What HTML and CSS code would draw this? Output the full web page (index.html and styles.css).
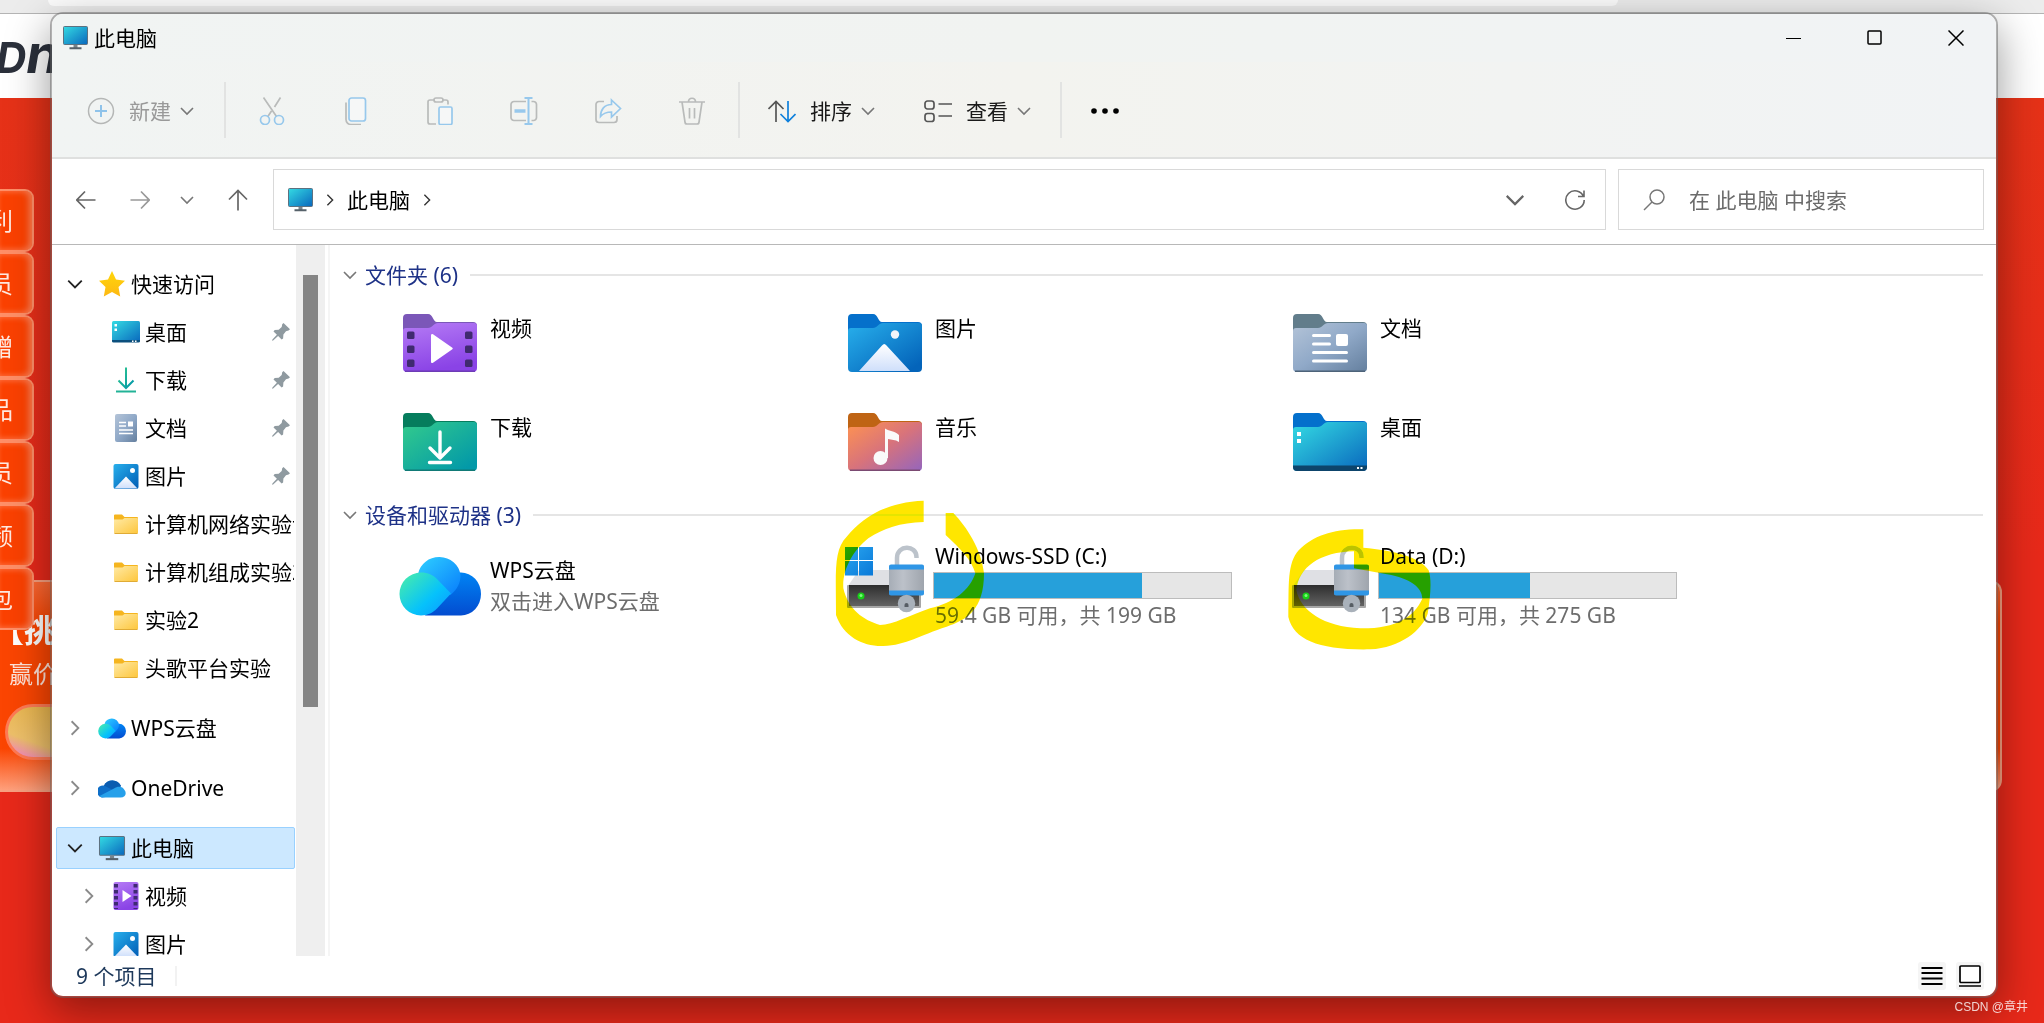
FILE: index.html
```html
<!DOCTYPE html>
<html lang="zh-CN">
<head>
    <meta charset="UTF-8">
    <meta name="viewport" content="width=device-width, initial-scale=1.0">
    <title>此电脑</title>
    <link rel="stylesheet" href="styles.css">
</head>
<body>
    <!-- shared icons -->
    <svg class="sprite" aria-hidden="true">
        <defs>
            <linearGradient id="g-screen" x1="0" y1="0" x2="1" y2="1"><stop offset="0" stop-color="#34dbe3"/><stop offset="1" stop-color="#0967bd"/></linearGradient>
            <linearGradient id="g-video" x1="0" y1="0" x2="0.3" y2="1"><stop offset="0" stop-color="#b57bf5"/><stop offset="1" stop-color="#8a43e6"/></linearGradient>
            <linearGradient id="g-down" x1="0" y1="0" x2="1" y2="1"><stop offset="0" stop-color="#33cb8c"/><stop offset="0.9" stop-color="#0399a8"/></linearGradient>
            <linearGradient id="g-pic" x1="0" y1="0" x2="1" y2="1"><stop offset="0" stop-color="#28b0ec"/><stop offset="0.9" stop-color="#0464ba"/></linearGradient>
            <linearGradient id="g-doc" x1="0" y1="0" x2="1" y2="1"><stop offset="0" stop-color="#b4c4d8"/><stop offset="0.5" stop-color="#90a9c8"/><stop offset="1" stop-color="#647f9e"/></linearGradient>
            <linearGradient id="g-music" x1="0" y1="0" x2="1" y2="1"><stop offset="0" stop-color="#ff9350"/><stop offset="0.5" stop-color="#d8737b"/><stop offset="1" stop-color="#9465bd"/></linearGradient>
            <linearGradient id="g-hill" x1="0" y1="0" x2="0" y2="1"><stop offset="0" stop-color="#fff"/><stop offset="1" stop-color="#cfdffb"/></linearGradient>
            <linearGradient id="g-folder" x1="0" y1="0" x2="1" y2="1"><stop offset="0" stop-color="#ffeaa6"/><stop offset="1" stop-color="#fdc63c"/></linearGradient>
            <linearGradient id="g-star" x1="0" y1="0" x2="0" y2="1"><stop offset="0" stop-color="#ffd60a"/><stop offset="1" stop-color="#fdb813"/></linearGradient>
            <linearGradient id="g-wps1" x1="0" y1="0" x2="1" y2="1"><stop offset="0" stop-color="#2fd0ff"/><stop offset="1" stop-color="#087dfc"/></linearGradient>
            <linearGradient id="g-wps2" x1="0" y1="0" x2="0.9" y2="0.8"><stop offset="0.15" stop-color="#3de6b8"/><stop offset="0.7" stop-color="#06c2fb"/><stop offset="1" stop-color="#0aa5ff"/></linearGradient>
            <linearGradient id="g-wps3" x1="0" y1="0" x2="0" y2="1"><stop offset="0" stop-color="#0084f4"/><stop offset="1" stop-color="#034cd0"/></linearGradient>
            <linearGradient id="g-disk" x1="0" y1="0" x2="0" y2="1"><stop offset="0" stop-color="#2d2d2d"/><stop offset="1" stop-color="#636363"/></linearGradient>
            <linearGradient id="g-lock" x1="0" y1="0" x2="1" y2="0"><stop offset="0" stop-color="#a6adb6"/><stop offset="0.4" stop-color="#bcc1c9"/><stop offset="1" stop-color="#9fa5ad"/></linearGradient>
            <linearGradient id="g-win" x1="0" y1="0" x2="1" y2="1"><stop offset="0" stop-color="#2aa6f0"/><stop offset="1" stop-color="#0a79d8"/></linearGradient>
        </defs>

        <symbol id="pc" viewBox="0 0 25 24">
            <rect x="0.5" y="0.5" width="24" height="18" rx="1" fill="url(#g-screen)" stroke="#5d7180"/>
            <path d="M10.500 19h4v3h-4z" fill="#7a858c"/><path d="M6.500 21.200h12v2h-12z" fill="#56616a"/>
        </symbol>
        <symbol id="down" viewBox="0 0 16 16"><path d="M2 5l6 6 6-6" fill="none" stroke="currentColor" stroke-width="1.600"/></symbol>
        <symbol id="right" viewBox="0 0 16 16"><path d="M5 2l6 6-6 6" fill="none" stroke="currentColor" stroke-width="1.600"/></symbol>
        <symbol id="pin" viewBox="0 0 20 20"><path d="M12.500 1l6.500 6.300-1.500 1.300-2.500.6-2.600 3.300-.3 4-1.500 1-3.500-3.500-5 4.500-1 .2.300-1.200 4.500-4.700L2.500 9.500l1.200-1.600 4-.2 3-2.700.5-2.800z" fill="#8f9aa0"/></symbol>
        <symbol id="dir" viewBox="0 0 25 20">
            <path d="M0.500 1.500a1 1 0 0 1 1-1h7l2.500 2.500h12.500a1 1 0 0 1 1 1v2H0.500z" fill="#f5b51f"/>
            <path d="M0.500 5.500h8.500l2-1.500h12.500a1 1 0 0 1 1 1v13.500a1 1 0 0 1-1 1h-22a1 1 0 0 1-1-1z" fill="url(#g-folder)"/>
            <path d="M1 19.500h23" stroke="#e0ab35"/>
        </symbol>
        <symbol id="picture" viewBox="0 0 25 25">
            <rect width="25" height="25" rx="2" fill="url(#g-pic)"/><circle cx="19" cy="6.500" r="2.500" fill="#fff"/>
            <path d="M1 24.500L12.500 12.500l11.500 12z" fill="url(#g-hill)"/>
        </symbol>
        <symbol id="film" viewBox="0 0 25 28">
            <rect width="25" height="28" rx="2" fill="url(#g-video)"/>
            <path d="M2.500 2v25M22 2v25" stroke="#3f2a73" stroke-width="4" stroke-dasharray="3.500 2.500"/>
            <path d="M9 8l9 6-9 6z" fill="#fff"/>
        </symbol>
        <symbol id="wps" viewBox="0 0 82 62">
            <path d="M58 18.500h4a20 21.500 0 0 1 0 43H26z" fill="url(#g-wps3)"/>
            <path d="M19 20a21.500 20.500 0 0 1 42.500 1c0 8-3 14-10 20z" fill="url(#g-wps1)"/>
            <path d="M22 18.500c7 0 12 2.500 16 6.500l14 14.500-14 15c-4 4-9 7-16 7a21.500 21.500 0 0 1 0-43z" fill="url(#g-wps2)"/>
        </symbol>
        <symbol id="disk" viewBox="0 0 82 68">
            <path d="M15 25h49l12 16H4z" fill="#dfe0e4"/>
            <rect x="3" y="40" width="74" height="23" rx="1" fill="#a7a7a7"/>
            <rect x="5" y="40" width="70" height="21" fill="url(#g-disk)"/>
            <circle cx="17" cy="51" r="3.500" fill="#18d018"/><circle cx="17" cy="50.500" r="1.500" fill="#7cf97c"/>
            <path d="M53 21V13c0-13.500 19.500-13.500 19.500-1v1" fill="none" stroke="#bcc3cb" stroke-width="4.500"/>
            <rect x="45" y="20" width="35" height="30" rx="2" fill="url(#g-lock)"/>
            <path d="M45 24.500V21.500a2 2 0 0 1 2-2h31a2 2 0 0 1 2 2v3zM45 45.500v3a2 2 0 0 0 2 2h31a2 2 0 0 0 2-2v-3z" fill="#2f96e6"/>
            <circle cx="62.500" cy="58.500" r="8.700" fill="#a9b1ba"/><path d="M60.500 62v-2a2 2 0 0 1 4 0v2z" fill="#565d64"/>
        </symbol>
    </svg>

    <!-- browser page behind the window -->
    <div class="page">
        <div class="browser-bar"><div class="browser-url"></div></div>
        <div class="site-header"><span class="logo">D<span class="logo-n">n</span></span></div>
        <div class="hero">
            <div class="promo">
                <div class="promo-title">【挑</div>
                <div class="promo-sub">赢价</div>
                <div class="promo-pill"></div>
            </div>
            <div class="side-tabs">
                <a href="#">利</a>
                <a href="#">员</a>
                <a href="#">赠</a>
                <a href="#">品</a>
                <a href="#">员</a>
                <a href="#">频</a>
                <a href="#">包</a>
            </div>
        </div>
    </div>

    <div class="window">
        <div class="titlebar">
            <svg class="pc-icon"><use href="#pc"/></svg>
            <span class="title">此电脑</span>
            <button class="win-btn" aria-label="最小化"><svg width="16" height="16"><path d="M0 8.500h15" stroke="#000" stroke-width="1"/></svg></button>
            <button class="win-btn" aria-label="最大化"><svg width="16" height="16"><rect x="1" y="1" width="13" height="13" rx="1" fill="none" stroke="#000" stroke-width="1.500"/></svg></button>
            <button class="win-btn" aria-label="关闭"><svg width="16" height="16"><path d="M0.500 0.500l15 15M15.500 0.500l-15 15" stroke="#000" stroke-width="1.500"/></svg></button>
        </div>

        <div class="toolbar">
            <button class="tool tool-new" disabled>
                <svg width="28" height="28" fill="none" stroke="#b5b7b6" stroke-width="1.500"><circle cx="14" cy="14" r="12.500"/><path d="M14 8v12M8 14h12" stroke="#8fc3ea" stroke-width="2"/></svg>
                <span>新建</span>
                <svg class="chev"><use href="#down"/></svg>
            </button>
            <span class="sep"></span>
            <div class="tool-group">
                <button class="tool-icon" aria-label="剪切" disabled>
                    <svg width="28" height="28" fill="none" stroke="#b9bbba" stroke-width="1.700"><path d="M5.500 0.500l13 19M22.500 0.500l-6 9.500M13.500 14l-4 6"/><g stroke="#97c8ec"><circle cx="7" cy="23" r="4.500"/><circle cx="21" cy="23" r="4.500"/></g></svg>
                </button>
                <button class="tool-icon" aria-label="复制" disabled>
                    <svg width="28" height="28" fill="none" stroke="#b9bbba" stroke-width="1.700"><path d="M4 5.500v17a5 5 0 0 0 5 5h10"/><rect x="7" y="1" width="16.500" height="23" rx="2.500" stroke="#97c8ec" fill="#f6f7f7"/></svg>
                </button>
                <button class="tool-icon" aria-label="粘贴" disabled>
                    <svg width="28" height="28" fill="none" stroke="#b9bbba" stroke-width="1.700"><path d="M10 27H4a2 2 0 0 1-2-2V5a2 2 0 0 1 2-2h4M17 3h3a2 2 0 0 1 2 2v2.500"/><rect x="8" y="1" width="9" height="4" rx="2"/><rect x="13" y="10" width="13" height="17.500" rx="1.500" stroke="#97c8ec" fill="#f6f7f7"/></svg>
                </button>
                <button class="tool-icon" aria-label="重命名" disabled>
                    <svg width="28" height="28" fill="none" stroke="#b9bbba" stroke-width="1.700"><path d="M16 23.500H4a3 3 0 0 1-3-3V7.500a3 3 0 0 1 3-3h12M21.500 4.500h2a3 3 0 0 1 3 3v13a3 3 0 0 1-3 3h-2"/><g stroke="#97c8ec" stroke-width="2"><path d="M18.500 1v26M14.500 1h8M14.500 27h8"/><path d="M4.500 14h11" stroke-width="3.500"/></g></svg>
                </button>
                <button class="tool-icon" aria-label="共享" disabled>
                    <svg width="28" height="28" fill="none" stroke="#b9bbba" stroke-width="1.700"><path d="M10 4.500H5a3 3 0 0 0-3 3v15a3 3 0 0 0 3 3h15a3 3 0 0 0 3-3v-3.500"/><path d="M17.500 3l9 8.500-9 8.500v-5c-5 0-8 1-11 4.500 0-7 4-12 11-12z" stroke="#97c8ec"/></svg>
                </button>
                <button class="tool-icon" aria-label="删除" disabled>
                    <svg width="28" height="28" fill="none" stroke="#b9bbba" stroke-width="1.700"><path d="M1 5h26M4 5l3 20a2 2 0 0 0 2 2h10a2 2 0 0 0 2-2l3-20M10.500 5c0-5 7-5 7 0M11.500 11v10.500M16.500 11v10.500"/></svg>
                </button>
            </div>
            <span class="sep"></span>
            <div class="tool-group">
                <button class="tool tool-menu">
                    <svg width="28" height="28" fill="none" stroke-width="1.700"><path d="M8 25V5M0.500 12L8 4.500l7.500 7.500" stroke="#555"/><path d="M20 4v20M12.500 17l7.500 7.500 7.500-7.500" stroke="#0f80dc"/></svg>
                    <span>排序</span>
                    <svg class="chev"><use href="#down"/></svg>
                </button>
                <button class="tool tool-menu">
                    <svg width="28" height="28" fill="none" stroke="#555" stroke-width="1.700"><rect x="1" y="4" width="9" height="8" rx="2.500"/><rect x="1" y="16.500" width="9" height="8" rx="2.500"/><path d="M14.500 7H28M14.500 19H28"/></svg>
                    <span>查看</span>
                    <svg class="chev"><use href="#down"/></svg>
                </button>
            </div>
            <span class="sep"></span>
            <button class="more" aria-label="更多"><svg width="28" height="6"><circle cx="3" cy="3" r="2.800"/><circle cx="14" cy="3" r="2.800"/><circle cx="25" cy="3" r="2.800"/></svg></button>
        </div>

        <div class="navbar">
            <button class="nav-btn" aria-label="后退"><svg width="20" height="20" fill="none" stroke="#666" stroke-width="1.700"><path d="M19.500 10H1M9 1.500L0.800 10 9 18.500"/></svg></button>
            <button class="nav-btn" aria-label="前进"><svg width="20" height="20" fill="none" stroke="#999" stroke-width="1.700"><path d="M0.500 10H19M11 1.500l8.200 8.500-8.200 8.500"/></svg></button>
            <button class="nav-btn nav-recent" aria-label="最近浏览的位置"><svg class="chev"><use href="#down"/></svg></button>
            <button class="nav-btn nav-up" aria-label="上移"><svg width="20" height="22" fill="none" stroke="#666" stroke-width="1.700"><path d="M10 21.500V2M1 10.500L10 1.500l9 9"/></svg></button>
            <div class="address">
                <svg class="pc-icon"><use href="#pc"/></svg>
                <svg class="crumb"><use href="#right"/></svg>
                <a href="#">此电脑</a>
                <svg class="crumb"><use href="#right"/></svg>
                <button class="addr-btn addr-first" aria-label="历史记录"><svg width="22" height="22"><use href="#down"/></svg></button>
                <button class="addr-btn" aria-label="刷新"><svg width="22" height="22" fill="none" stroke="#666" stroke-width="1.600"><path d="M19.500 7.500A9.200 9.200 0 1 0 20.200 11M20 1.500v6h-6"/></svg></button>
            </div>
            <label class="search">
                <svg width="22" height="22" fill="none" stroke="#777" stroke-width="1.500"><circle cx="14" cy="8" r="7"/><path d="M9 13L1 21"/></svg>
                <input type="text" placeholder="在 此电脑 中搜索" aria-label="搜索">
            </label>
        </div>

        <div class="body">
            <nav class="sidebar">
                <ul>
                    <li><a href="#"><svg class="arrow open"><use href="#down"/></svg><svg class="ico" viewBox="0 0 28 28"><path d="M14 1l4 8.500 9 1.200-6.500 6.300 1.700 9.500-8.200-4.500-8.200 4.500L7.500 17 1 10.700l9-1.200z" fill="url(#g-star)"/></svg>快速访问</a></li>
                    <li class="sub"><a href="#"><svg class="ico" viewBox="0 0 28 28"><rect y="3" width="28" height="21" rx="1.500" fill="url(#g-screen)"/><path d="M0 22h28v1a1.500 1.500 0 0 1-1.500 1.500h-25A1.500 1.500 0 0 1 0 23z" fill="#0b4f7d"/><path d="M2.500 6h2.500v2.500h-2.500zM2.500 10.500h2.500v2.500h-2.500zM20 22.500h1.500v1.500h-1.500zM23 22.500h1.500v1.500h-1.500z" fill="#fff"/></svg>桌面</a><svg class="pin"><use href="#pin"/></svg></li>
                    <li class="sub"><a href="#"><svg class="ico" viewBox="0 0 28 28" fill="none" stroke="url(#g-down)" stroke-width="2"><path d="M14 1.500L14.010 22M6.500 14.500l7.500 7.500 7.500-7.500"/><path d="M4 25.500h20" stroke="#22b397"/></svg>下载</a><svg class="pin"><use href="#pin"/></svg></li>
                    <li class="sub"><a href="#"><svg class="ico" viewBox="0 0 28 28"><rect x="3" width="22" height="28" rx="2" fill="url(#g-doc)"/><path d="M7 8.500h7M7 12h7M7 16h14M7 19.500h14" stroke="#fff" stroke-width="1.700"/><path d="M16 7.500h5v5h-5z" fill="#fff"/></svg>文档</a><svg class="pin"><use href="#pin"/></svg></li>
                    <li class="sub"><a href="#"><svg class="ico ico-s"><use href="#picture"/></svg>图片</a><svg class="pin"><use href="#pin"/></svg></li>
                    <li class="sub"><a href="#"><svg class="ico ico-dir"><use href="#dir"/></svg>计算机网络实验记录</a></li>
                    <li class="sub"><a href="#"><svg class="ico ico-dir"><use href="#dir"/></svg>计算机组成实验2</a></li>
                    <li class="sub"><a href="#"><svg class="ico ico-dir"><use href="#dir"/></svg>实验2</a></li>
                    <li class="sub"><a href="#"><svg class="ico ico-dir"><use href="#dir"/></svg>头歌平台实验</a></li>
                    <li class="root"><a href="#"><svg class="arrow"><use href="#right"/></svg><svg class="ico"><use href="#wps"/></svg>WPS云盘</a></li>
                    <li class="root"><a href="#"><svg class="arrow"><use href="#right"/></svg><svg class="ico" viewBox="0 0 28 28"><path d="M4 23.500a6 6 0 0 1 2-12A9.500 9.500 0 0 1 23 12l-8 10z" fill="#0f6fc8"/><path d="M6 11.500A9.500 9.500 0 0 1 23 12l-7 4.500z" fill="#0a5cb0"/><path d="M4 23.500c-1.500-.3-2-1-2.500-1.500L16 14.500c4-3 9-2 10.500 1.500 2.500 3 1 7.500-4 7.500z" fill="#26a0ea"/></svg>OneDrive</a></li>
                    <li class="root selected"><a href="#"><svg class="arrow open"><use href="#down"/></svg><svg class="ico ico-pc"><use href="#pc"/></svg>此电脑</a></li>
                    <li class="sub"><a href="#"><svg class="arrow"><use href="#right"/></svg><svg class="ico"><use href="#film"/></svg>视频</a></li>
                    <li class="sub"><a href="#"><svg class="arrow"><use href="#right"/></svg><svg class="ico ico-s"><use href="#picture"/></svg>图片</a></li>
                </ul>
                <div class="track"><div class="thumb"></div></div>
            </nav>

            <main class="content">
                <section>
                    <h2><svg class="chev"><use href="#down"/></svg>文件夹 (6)</h2>
                    <div class="tiles">
                        <a class="tile" href="#">
                            <svg class="folder" viewBox="0 0 74 58"><path d="M0 4a4 4 0 0 1 4-4h21c5 0 5 8 9 8h36a4 4 0 0 1 4 4v10H0z" fill="#7b57b8"/><path d="M0 17a3 3 0 0 1 3-3h22c4 0 6-5 10-5h36a3 3 0 0 1 3 3v42a4 4 0 0 1-4 4H4a4 4 0 0 1-4-4z" fill="url(#g-video)"/><path d="M2 57.300h70" stroke="#6d3cb5" stroke-width="1.400"/><g fill="#402a70"><rect x="4" y="17.500" width="7.500" height="7.500" rx="1.500"/><rect x="4" y="31.500" width="7.500" height="7.500" rx="1.500"/><rect x="4" y="45.500" width="7.500" height="7.500" rx="1.500"/><rect x="62" y="17.500" width="7.500" height="7.500" rx="1.500"/><rect x="62" y="31.500" width="7.500" height="7.500" rx="1.500"/><rect x="62" y="45.500" width="7.500" height="7.500" rx="1.500"/></g><path d="M28 21.500c0-1.500 1-2 2-1.200l19 13.200c1 .7 1 1.300 0 2L30 48.700c-1 .8-2 .3-2-1.200z" fill="#fff"/></svg>
                            <span class="info"><span class="name">视频</span></span>
                        </a>
                        <a class="tile" href="#">
                            <svg class="folder" viewBox="0 0 74 58"><path d="M0 4a4 4 0 0 1 4-4h21c5 0 5 8 9 8h36a4 4 0 0 1 4 4v10H0z" fill="#0570cb"/><path d="M0 17a3 3 0 0 1 3-3h22c4 0 6-5 10-5h36a3 3 0 0 1 3 3v42a4 4 0 0 1-4 4H4a4 4 0 0 1-4-4z" fill="url(#g-pic)"/><circle cx="47" cy="20.500" r="4.200" fill="#f2f5f9"/><path d="M11 57l23-25.500c1.500-2 3-2 4.500 0L62 57z" fill="url(#g-hill)"/></svg>
                            <span class="info"><span class="name">图片</span></span>
                        </a>
                        <a class="tile" href="#">
                            <svg class="folder" viewBox="0 0 74 58"><path d="M0 4a4 4 0 0 1 4-4h21c5 0 5 8 9 8h36a4 4 0 0 1 4 4v10H0z" fill="#627d8b"/><path d="M0 17a3 3 0 0 1 3-3h22c4 0 6-5 10-5h36a3 3 0 0 1 3 3v42a4 4 0 0 1-4 4H4a4 4 0 0 1-4-4z" fill="url(#g-doc)"/><path d="M2 57.300h70" stroke="#4d6379" stroke-width="1.400"/><path d="M20.500 21.500h16M20.500 30h16M20.500 38.500h33M20.500 47h33" stroke="#fff" stroke-width="3" stroke-linecap="round"/><rect x="43" y="20" width="12" height="12" rx="2" fill="#fff"/></svg>
                            <span class="info"><span class="name">文档</span></span>
                        </a>
                        <a class="tile" href="#">
                            <svg class="folder" viewBox="0 0 74 58"><path d="M0 4a4 4 0 0 1 4-4h21c5 0 5 8 9 8h36a4 4 0 0 1 4 4v10H0z" fill="#067d5d"/><path d="M0 17a3 3 0 0 1 3-3h22c4 0 6-5 10-5h36a3 3 0 0 1 3 3v42a4 4 0 0 1-4 4H4a4 4 0 0 1-4-4z" fill="url(#g-down)"/><path d="M2 57.300h70" stroke="#117a76" stroke-width="1.400"/><path d="M37 19v26M27 35l10 10 10-10M26.500 49.500h21" fill="none" stroke="#fff" stroke-width="3.400" stroke-linecap="round" stroke-linejoin="round"/></svg>
                            <span class="info"><span class="name">下载</span></span>
                        </a>
                        <a class="tile" href="#">
                            <svg class="folder" viewBox="0 0 74 58"><path d="M0 4a4 4 0 0 1 4-4h21c5 0 5 8 9 8h36a4 4 0 0 1 4 4v10H0z" fill="#bf6414"/><path d="M0 17a3 3 0 0 1 3-3h22c4 0 6-5 10-5h36a3 3 0 0 1 3 3v42a4 4 0 0 1-4 4H4a4 4 0 0 1-4-4z" fill="url(#g-music)"/><path d="M2 57.300h70" stroke="#7b4a72" stroke-width="1.400"/><circle cx="32.500" cy="45" r="7" fill="#fafafa"/><path d="M37 45V15.500c5 3 9 2 14 6.500v7c-4-2.500-7-2-11-3V45z" fill="#fafafa"/></svg>
                            <span class="info"><span class="name">音乐</span></span>
                        </a>
                        <a class="tile" href="#">
                            <svg class="folder" viewBox="0 0 74 58"><path d="M0 4a4 4 0 0 1 4-4h21c5 0 5 8 9 8h36a4 4 0 0 1 4 4v10H0z" fill="#0470cc"/><path d="M0 17a3 3 0 0 1 3-3h22c4 0 6-5 10-5h36a3 3 0 0 1 3 3v42a4 4 0 0 1-4 4H4a4 4 0 0 1-4-4z" fill="url(#g-screen)"/><path d="M0 52.500h74V54a4 4 0 0 1-4 4H4a4 4 0 0 1-4-4z" fill="#0d446b"/><path d="M4 19h4v4H4zM4 26h4v4H4zM64 54h2v2h-2zM67.500 54h2v2h-2z" fill="#fff"/></svg>
                            <span class="info"><span class="name">桌面</span></span>
                        </a>
                    </div>
                </section>

                <section>
                    <h2><svg class="chev"><use href="#down"/></svg>设备和驱动器 (3)</h2>
                    <div class="tiles">
                        <a class="tile tile-cloud" href="#">
                            <svg class="drive-icon"><use href="#wps"/></svg>
                            <span class="info"><span class="name">WPS云盘</span><span class="detail">双击进入WPS云盘</span></span>
                        </a>
                        <a class="tile tile-drive" href="#">
                            <svg class="drive-icon" viewBox="0 0 82 68"><use href="#disk"/><path d="M1 2h13v13H1zM15 2h14v13H15zM1 16h13v14.500H1zM15 16h14v14.500H15z" fill="url(#g-win)"/></svg>
                            <span class="info"><span class="name">Windows-SSD (C:)</span><span class="bar"><span class="used" style="width: 70%"></span></span><span class="detail">59.4 GB 可用，共 199 GB</span></span>
                            <svg class="marker marker-c" viewBox="45 630 450 441"><path d="M311 632C200 636 130 680 80 740C40 780 48 850 48 975C70 1040 130 1070 190 1068C260 1065 300 1035 380 1010C440 990 492 960 492 850C485 780 440 710 400 669L377 669L377 735C420 775 455 810 466 850C450 900 400 940 330 955C270 975 220 1005 180 1005C130 990 85 960 70 895C66 840 100 780 145 745C190 715 240 698 311 696Z" fill="#ffe600"/></svg>
                        </a>
                        <a class="tile tile-drive" href="#">
                            <svg class="drive-icon" viewBox="0 0 82 68"><use href="#disk"/></svg>
                            <span class="info"><span class="name">Data (D:)</span><span class="bar"><span class="used" style="width: 51%"></span></span><span class="detail">134 GB 可用，共 275 GB</span></span>
                            <svg class="marker marker-d" viewBox="50 713 435 369"><path fill-rule="evenodd" d="M279 717C190 715 130 735 85 780C50 820 56 880 54 980C70 1050 150 1080 300 1077C390 1072 455 1020 472 970C480 920 485 870 475 840C450 800 370 780 279 772ZM251 783L251 834L350 852C420 865 455 890 456 925C430 980 380 1015 270 1014C160 1010 90 960 78 900C85 830 150 785 251 783Z" fill="#ffe600"/></svg>
                        </a>
                    </div>
                </section>
            </main>
        </div>

        <div class="statusbar">
            <span class="count">9 个项目</span>
            <button class="view-btn" aria-label="详细信息"><svg width="22" height="22"><path d="M0.500 3h21M0.500 8h21M0.500 13.500h21M0.500 19h21" stroke="#000" stroke-width="2"/></svg></button>
            <button class="view-btn" aria-label="大图标"><svg width="22" height="22"><rect x="1" y="1" width="20" height="16.500" rx="1" fill="#fff" stroke="#000" stroke-width="1.700"/><path d="M0 21h22" stroke="#000" stroke-width="1.500"/></svg></button>
        </div>
    </div>

    <div class="watermark">CSDN @章井</div>
</body>
</html>
```

FILE: styles.css
```css
* {
    box-sizing: border-box;
}

body {
    margin: 0;
    height: 100vh;
    position: relative;
    overflow: hidden;
    font-family: "Noto Sans", "Noto Sans CJK SC", sans-serif;
    font-size: 21px;
    line-height: 28px;
    color: #000;
}

a {
    color: inherit;
    text-decoration: none;
}

button {
    display: flex;
    align-items: center;
    justify-content: center;
    padding: 0;
    border: none;
    background: none;
    color: inherit;
    font: inherit;
}

svg {
    display: block;
    flex: none;
}

.sprite {
    position: absolute;
    width: 0;
    height: 0;
}

/* page behind */
.page {
    height: 100%;
    display: flex;
    flex-direction: column;
    background: #e8291a;
}

.browser-bar {
    height: 14px;
    padding: 0 426px 0 48px;
    background: #ececec;
    border-bottom: 1px solid #b4b4b4;
}

.browser-url {
    height: 6px;
    border-radius: 0 0 16px 16px;
    background: #fbfbfb;
}

.site-header {
    height: 84px;
    display: flex;
    align-items: center;
    background: #fff;
}

.logo {
    margin-left: -4px;
    font-family: Inter, sans-serif;
    font-size: 42px;
    font-style: italic;
    font-weight: 700;
    color: #2b303b;
}

.logo-n {
    font-size: 54px;
}

.hero {
    flex: 1;
    display: grid;
    align-items: start;
    background: linear-gradient(#e63218, #e8291a 50%);
}

.promo,
.side-tabs {
    grid-area: 1 / 1;
}

.promo {
    height: 212px;
    margin: 482px 42px 0 0;
    padding-top: 32px;
    border: 2px solid #f8a080;
    border-left: none;
    border-radius: 0 12px 12px 0;
    background: linear-gradient(#ff6a35, #fb4502 20%, #fb4502 80%, #ffa07c);
    color: #fff;
    white-space: nowrap;
}

.promo-title {
    margin-left: -8px;
    font-size: 32px;
    font-weight: 700;
    line-height: 32px;
}

.promo-sub {
    padding: 14px 0 0 9px;
    font-size: 24px;
    color: #ffe3d8;
}

.promo-pill {
    width: 200px;
    height: 56px;
    margin: 16px 0 0 5px;
    border: 3px solid #ff7a55;
    border-radius: 28px;
    background: linear-gradient(20deg, #f47bd0, #eec06a 20%, #e5a826);
}

.side-tabs {
    width: 34px;
    margin-top: 91px;
}

.side-tabs a {
    display: flex;
    align-items: center;
    justify-content: flex-end;
    height: 63px;
    padding-right: 19px;
    border: 2px solid #ff8f68;
    border-left: none;
    border-radius: 0 9px 9px 0;
    background: #fb4102;
    box-shadow: inset -3px 0 6px #ff8055;
    color: #ffe9e0;
    font-size: 24px;
}

/* explorer window */
.window {
    position: absolute;
    inset: 12px 46px 25px 50px;
    display: flex;
    flex-direction: column;
    overflow: hidden;
    border: 2px solid rgba(100, 100, 100, 0.5);
    border-radius: 13px;
    background: #fff;
    background-clip: padding-box;
    box-shadow: 0 14px 44px rgba(0, 0, 0, 0.4);
}

.titlebar {
    height: 48px;
    display: flex;
    align-items: center;
    padding-left: 11px;
    background: linear-gradient(90deg, #f1f4f3, #f1f3f1 50%, #f1f3f5);
}

.pc-icon {
    width: 25px;
    height: 24px;
}

.title {
    flex: 1;
    padding-left: 6px;
}

.win-btn {
    width: 81px;
    height: 48px;
}

.toolbar {
    height: 97px;
    display: flex;
    align-items: center;
    border-bottom: 2px solid #dfe0df;
    background: linear-gradient(90deg, #f1f4f3, #f3f3ef 50%, #f1f3f5);
    color: #1a1a1a;
}

.toolbar button {
    padding-top: 2px;
}

.chev {
    width: 16px;
    height: 16px;
    color: #777;
}

.sep {
    width: 2px;
    height: 56px;
    background: #e2e3e2;
}

.tool {
    gap: 14px;
}

.tool .chev {
    margin-left: -6px;
}

.tool-new {
    width: 172px;
    padding-left: 6px;
    color: #999;
}

.tool-group {
    display: flex;
    padding: 0 4px;
}

.tool-icon {
    width: 84px;
    height: 56px;
}

.tool-menu {
    width: 156px;
}

.more {
    width: 86px;
    height: 56px;
}

.navbar {
    display: flex;
    padding: 10px 12px 14px 7px;
    border-bottom: 1px solid #b8b8b8;
}

.nav-btn {
    width: 54px;
}

.nav-recent {
    width: 40px;
}

.nav-up {
    width: 62px;
    margin-right: 4px;
}

.address,
.search {
    display: flex;
    align-items: center;
    height: 61px;
    border: 1px solid #d9d9d9;
}

.address {
    flex: 1;
    padding: 0 0 0 14px;
}

.crumb {
    width: 14px;
    height: 14px;
    margin: 0 10px;
    color: #333;
}

.addr-btn {
    width: 60px;
    height: 100%;
    color: #666;
}

.addr-first {
    margin-left: auto;
}

.search {
    width: 366px;
    margin-left: 12px;
    padding-left: 24px;
    gap: 24px;
}

.search input {
    flex: 1;
    min-width: 0;
    padding: 0;
    border: none;
    outline: none;
    background: none;
    font: inherit;
}

.search input::placeholder {
    color: #6b6b6b;
}

.body {
    flex: 1;
    display: flex;
    min-height: 0;
}

.sidebar {
    display: flex;
    width: 278px;
    border-right: 2px solid #f5f5f5;
}

.sidebar ul {
    flex: 1;
    min-width: 0;
    margin: 0;
    padding: 18px 1px 0 4px;
    overflow: hidden;
    list-style: none;
}

.sidebar li {
    display: flex;
    align-items: center;
    justify-content: space-between;
    height: 42px;
    margin-bottom: 6px;
    border: 1px solid transparent;
}

.sidebar .root {
    margin-top: 18px;
}

.sidebar li a {
    flex: 1;
    display: flex;
    align-items: center;
    min-width: 0;
    padding-left: 9px;
    overflow: hidden;
    white-space: nowrap;
}

.sidebar .sub a {
    padding-left: 55px;
}

.sidebar .sub a:has(.arrow) {
    padding-left: 23px;
}

.sidebar .selected {
    border-color: #99d1ff;
    border-radius: 2px;
    background: #cce8ff;
}

.arrow {
    width: 18px;
    height: 18px;
    margin-right: 14px;
    color: #8a8a8a;
}

.arrow.open {
    color: #222;
}

.ico {
    width: 28px;
    height: 28px;
    margin-right: 5px;
}

.ico-s,
.ico-pc {
    height: 25px;
}

.ico-dir {
    height: 20px;
}

.pin {
    width: 20px;
    height: 20px;
    margin-right: 3px;
}

.track {
    width: 29px;
    margin-right: 3px;
    padding: 30px 7px 0;
    background: #efefef;
}

.thumb {
    height: 432px;
    background: #858585;
}

.content {
    flex: 1;
    min-width: 0;
    padding: 11px 13px 0 12px;
}

.content h2 {
    display: flex;
    align-items: center;
    gap: 7px;
    height: 38px;
    margin: 0;
    font-size: 21px;
    font-weight: 400;
    color: #1e3287;
}

.content h2::after {
    content: "";
    flex: 1;
    height: 2px;
    margin-left: 5px;
    background: #e5e5e5;
}

.content section + section {
    margin-top: 4px;
}

.tiles {
    display: grid;
    grid-template-columns: repeat(auto-fill, 445px);
    grid-auto-rows: 99px;
    padding-left: 57px;
}

.tile {
    position: relative;
    display: flex;
    gap: 9px;
}

.folder {
    width: 74px;
    height: 58px;
    margin: 20px 4px 0;
}

.info {
    display: flex;
    flex-direction: column;
    gap: 3px;
    padding-top: 20px;
}

.drive-icon {
    width: 82px;
    height: 68px;
    margin-top: 11px;
}

.tile-cloud .drive-icon {
    height: 62px;
    margin-top: 20px;
}

.tile-cloud .info {
    padding-top: 22px;
}

.tile-drive .info {
    width: 299px;
    padding-top: 8px;
    gap: 2px;
}

.tile-drive {
    gap: 7px;
}

.tile-drive .name,
.tile-drive .detail {
    padding-left: 2px;
}

.detail {
    color: #6d6d6d;
}

.bar {
    height: 27px;
    border: 1px solid #bcbcbc;
    background: #e6e6e6;
}

.used {
    display: block;
    height: 100%;
    background: #26a0da;
}

/* highlighter loops drawn over the drives */
.marker {
    position: absolute;
    mix-blend-mode: darken;
    pointer-events: none;
}

.marker-c {
    left: -9px;
    top: -34px;
    width: 150px;
    height: 147px;
}

.marker-d {
    left: -2px;
    top: -6px;
    width: 145px;
    height: 123px;
}

.statusbar {
    display: flex;
    align-items: center;
    gap: 10px;
    height: 40px;
    padding: 0 12px 0 24px;
}

.count {
    margin-right: auto;
    padding-right: 19px;
    border-right: 2px solid #f2f2f2;
    line-height: 20px;
    color: #1e395b;
}

.view-btn {
    width: 28px;
    height: 28px;
    border-radius: 3px;
    background: #f5f5f5;
}

.watermark {
    position: absolute;
    right: 16px;
    bottom: 6px;
    font-family: "Liberation Sans", "Noto Sans CJK SC", sans-serif;
    font-size: 12px;
    line-height: 20px;
    color: rgba(255, 255, 255, 0.8);
}
```
